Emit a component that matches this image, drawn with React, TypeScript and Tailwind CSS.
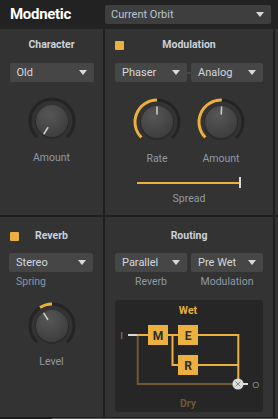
import React, { useId } from "react";

const ORANGE = "#ebb03d";

function Arrow() {
  return (
    <svg width="8" height="5" viewBox="0 0 8 5" className="shrink-0">
      <path d="M0 0 L8 0 L4 5 Z" fill="#d6d9dd" />
    </svg>
  );
}

function Dropdown({ label, className = "" }: { label: string; className?: string }) {
  return (
    <div
      className={`h-[19px] bg-[#464646] rounded-[2px] flex items-center justify-between pl-[7px] pr-[7px] text-[11px] text-[#d5d9df] leading-none ${className}`}
    >
      <span>{label}</span>
      <Arrow />
    </div>
  );
}

function Knob({ angle, arcFrom, arcTo }: { angle: number; arcFrom?: number; arcTo?: number }) {
  const id = useId().replace(/:/g, "");
  const c = 26;
  const pt = (a: number, rad: number) => [
    c + rad * Math.sin((a * Math.PI) / 180),
    c - rad * Math.cos((a * Math.PI) / 180),
  ];
  const arc = (a1: number, a2: number, rad: number) => {
    const [x1, y1] = pt(a1, rad);
    const [x2, y2] = pt(a2, rad);
    const large = a2 - a1 > 180 ? 1 : 0;
    return `M${x1} ${y1} A${rad} ${rad} 0 ${large} 1 ${x2} ${y2}`;
  };
  const [ix1, iy1] = pt(angle, 8);
  const [ix2, iy2] = pt(angle, 15);
  return (
    <svg width="52" height="52" viewBox="0 0 52 52">
      <defs>
        <radialGradient id={`g${id}`} cx="40%" cy="30%" r="75%">
          <stop offset="0%" stopColor="#565656" />
          <stop offset="100%" stopColor="#3c3c3c" />
        </radialGradient>
      </defs>
      <path d={arc(-137, 137, 22)} stroke="#242424" strokeWidth="3" fill="none" />
      {arcFrom !== undefined && arcTo !== undefined && (
        <path d={arc(arcFrom, arcTo, 22)} stroke={ORANGE} strokeWidth="3" fill="none" />
      )}
      <circle cx={c} cy={c + 1} r="17" fill="#262626" opacity="0.6" />
      <circle cx={c} cy={c} r="16" fill={`url(#g${id})`} />
      <line x1={ix1} y1={iy1} x2={ix2} y2={iy2} stroke="#c9c9c9" strokeWidth="1.6" strokeLinecap="round" />
    </svg>
  );
}

function Label({ children, className = "" }: { children: React.ReactNode; className?: string }) {
  return <div className={`text-[10.5px] leading-[12px] text-[#909aa7] ${className}`}>{children}</div>;
}

function Square() {
  return <div className="w-[9px] h-[9px] bg-[#ebb03d] rounded-[1px]" />;
}

function TitleRow({ title, square, className = "" }: { title: string; square?: boolean; className?: string }) {
  return (
    <div className={`grid grid-cols-[1fr_auto_1fr] items-center px-[10px] ${className}`}>
      <div>{square && <Square />}</div>
      <div className="text-[10.5px] font-bold text-[#c9d1dc] leading-none">{title}</div>
      <div />
    </div>
  );
}

function Diagram() {
  const wire = ORANGE;
  const dry = "#6d5a32";
  return (
    <div className="w-[148px] h-[112px] bg-[#262626] rounded-[3px]">
      <svg width="148" height="112" viewBox="0 0 148 112">
        <text x="73" y="13.5" textAnchor="middle" fontSize="10.5" fontWeight="bold" fill={ORANGE} fontFamily="Roboto, sans-serif">
          Wet
        </text>
        <path d="M22.7 35 L22.7 84 L118 84" stroke={dry} strokeWidth="2" fill="none" />
        <path d="M22 35 L33 35" stroke={wire} strokeWidth="2" />
        <path d="M53 35 L63 35" stroke={wire} strokeWidth="2" />
        <path d="M57.5 35 L57.5 65 L63 65" stroke={wire} strokeWidth="2" fill="none" />
        <path d="M83 35 L123.3 35 L123.3 79" stroke={wire} strokeWidth="2" fill="none" />
        <path d="M83 65 L123.3 65" stroke={wire} strokeWidth="2" />
        <path d="M13 35 L22 35" stroke="#d8d8d8" strokeWidth="2" />
        <text x="6.7" y="38.5" textAnchor="middle" fontSize="9" fill="#8e8e8e" fontFamily="Roboto, sans-serif">
          I
        </text>
        <rect x="33" y="25" width="20" height="20" fill={ORANGE} />
        <rect x="63" y="25" width="20" height="20" fill={ORANGE} />
        <rect x="63" y="55" width="20" height="20" fill={ORANGE} />
        <text x="43" y="39.5" textAnchor="middle" fontSize="12" fontWeight="bold" fill="#2e2e2e" fontFamily="Roboto, sans-serif">M</text>
        <text x="73" y="39.5" textAnchor="middle" fontSize="12" fontWeight="bold" fill="#2e2e2e" fontFamily="Roboto, sans-serif">E</text>
        <text x="73" y="69.5" textAnchor="middle" fontSize="12" fontWeight="bold" fill="#2e2e2e" fontFamily="Roboto, sans-serif">R</text>
        <path d="M128 84 L133 84" stroke="#d8d8d8" strokeWidth="2" />
        <circle cx="123" cy="84" r="5.6" fill="#dcdcdc" />
        <path d="M120.5 81.5 L125.5 86.5 M125.5 81.5 L120.5 86.5" stroke="#8a8a8a" strokeWidth="1" />
        <text x="140.7" y="87.5" textAnchor="middle" fontSize="9" fill="#8e8e8e" fontFamily="'Liberation Sans', sans-serif">
          O
        </text>
        <text x="73" y="107" textAnchor="middle" fontSize="10.5" fontWeight="bold" fill={dry} fontFamily="Roboto, sans-serif">
          Dry
        </text>
      </svg>
    </div>
  );
}

export default function App() {
  return (
    <div
      className="w-[278px] h-[419px] bg-[#1f1f1f] overflow-hidden flex flex-col"
      style={{ fontFamily: "Roboto, 'Liberation Sans', sans-serif" }}
    >
      <div className="h-[29px] bg-[#222222] flex items-center shrink-0">
        <div className="pl-[10px] text-[15px] font-bold text-white tracking-[-0.3px] leading-none">Modnetic</div>
        <div className="ml-auto mr-[7px] w-[166px] h-[19px] bg-[#3e3e3e] rounded-[2px] flex items-center justify-between pl-[6px] pr-[7px] text-[11px] text-[#bcc4cf] leading-none">
          <span>Current Orbit</span>
          <Arrow />
        </div>
      </div>

      <div className="h-[186px] flex shrink-0">
        <div className="w-[103px] bg-[#333333] flex flex-col items-center">
          <TitleRow title="Character" className="h-[32px] w-full" />
          <Dropdown label="Old" className="w-[84px] mt-[2px]" />
          <div className="mt-[13px]">
            <Knob angle={-148} />
          </div>
          <Label className="mt-[5px]">Amount</Label>
        </div>
        <div className="w-[2px]" />
        <div className="w-[168px] bg-[#333333] flex flex-col items-center">
          <TitleRow title="Modulation" square className="h-[32px] w-full" />
          <div className="mt-[2px] flex items-center">
            <Dropdown label="Phaser" className="w-[72px]" />
            <div className="w-[4px] h-[2px] bg-[#474747]" />
            <Dropdown label="Analog" className="w-[72px]" />
          </div>
          <div className="mt-[14px] flex gap-[12px]">
            <div className="flex flex-col items-center">
              <Knob angle={0} arcFrom={-135} arcTo={0} />
              <Label className="mt-[5px]">Rate</Label>
            </div>
            <div className="flex flex-col items-center">
              <Knob angle={2} arcFrom={-135} arcTo={2} />
              <Label className="mt-[5px]">Amount</Label>
            </div>
          </div>
          <div className="mt-[12px] w-[104px] h-[11px] flex items-center">
            <div className="flex-1 h-[2px] bg-[#ebb03d]" />
            <div className="w-[2px] h-[11px] bg-[#d8d8d8]" />
          </div>
          <Label className="mt-[5px]">Spread</Label>
        </div>
        <div className="w-[2px]" />
        <div className="flex-1 bg-[#333333]" />
      </div>

      <div className="h-[2px] shrink-0" />

      <div className="h-[200px] flex shrink-0">
        <div className="w-[103px] bg-[#333333] flex flex-col">
          <TitleRow title="Reverb" square className="h-[36px] pt-[2px] w-full px-[9px]" />
          <Dropdown label="Stereo" className="w-[84px] ml-[9px]" />
          <div className="mt-[4px] pl-[16px] text-[10.5px] leading-[12px] text-[#8597ac]">Spring</div>
          <div className="mt-[12px] self-center">
            <Knob angle={-33} arcFrom={-33} arcTo={0} />
          </div>
          <Label className="mt-[4px] self-center">Level</Label>
        </div>
        <div className="w-[2px]" />
        <div className="w-[168px] bg-[#333333] flex flex-col items-center">
          <TitleRow title="Routing" className="h-[36px] pt-[2px] w-full" />
          <div className="flex gap-[4px]">
            <Dropdown label="Parallel" className="w-[72px]" />
            <Dropdown label="Pre Wet" className="w-[72px]" />
          </div>
          <div className="mt-[4px] flex gap-[4px]">
            <Label className="w-[72px] text-center">Reverb</Label>
            <Label className="w-[72px] text-center">Modulation</Label>
          </div>
          <div className="mt-[12px]">
            <Diagram />
          </div>
        </div>
        <div className="w-[2px]" />
        <div className="flex-1 bg-[#333333]" />
      </div>

      <div className="flex-1 flex flex-col">
        <div className="h-[1px] bg-[#1c1c1c]" />
        <div className="flex-1 flex">
          <div className="w-[52px] bg-[#1c1c1c]" />
          <div className="flex-1 bg-[#5a5a5a]" />
        </div>
      </div>
    </div>
  );
}
